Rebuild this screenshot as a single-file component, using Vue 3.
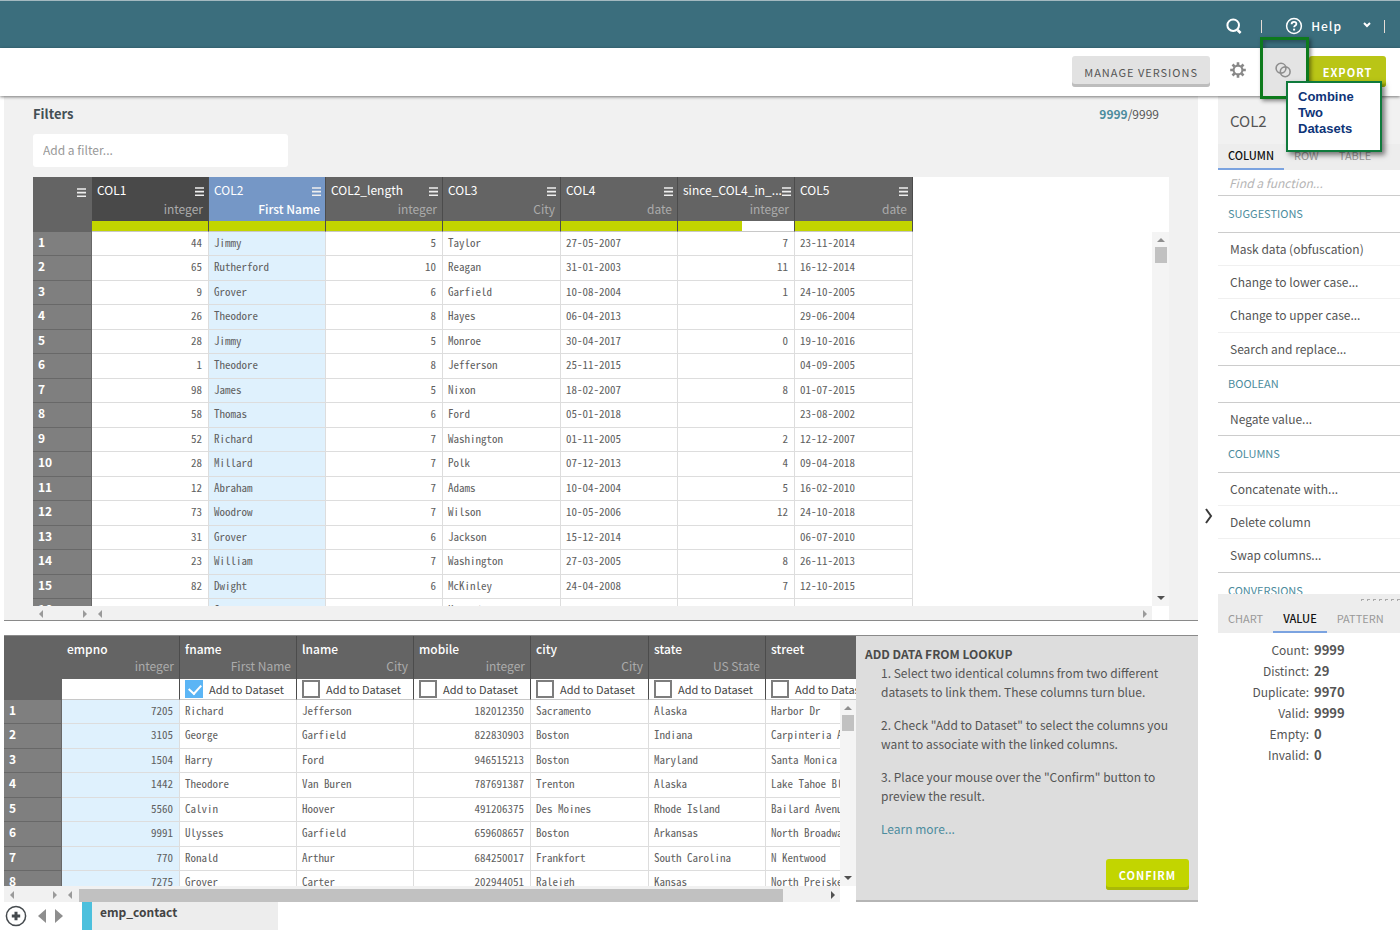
<script setup>
import { ref } from 'vue'

const columns = [
  { name: 'COL1', type: 'integer', width: 117, state: 'active', valid: 100, num: true },
  { name: 'COL2', type: 'First Name', width: 117, state: 'selected', valid: 100 },
  { name: 'COL2_length', type: 'integer', width: 117, valid: 100, num: true },
  { name: 'COL3', type: 'City', width: 118, valid: 100 },
  { name: 'COL4', type: 'date', width: 117, valid: 100 },
  { name: 'since_COL4_in_...', type: 'integer', width: 117, valid: 55, num: true },
  { name: 'COL5', type: 'date', width: 118, valid: 100 }
]

const rows = [
  [44, 'Jimmy', 5, 'Taylor', '27-05-2007', 7, '23-11-2014'],
  [65, 'Rutherford', 10, 'Reagan', '31-01-2003', 11, '16-12-2014'],
  [9, 'Grover', 6, 'Garfield', '10-08-2004', 1, '24-10-2005'],
  [26, 'Theodore', 8, 'Hayes', '06-04-2013', '', '29-06-2004'],
  [28, 'Jimmy', 5, 'Monroe', '30-04-2017', 0, '19-10-2016'],
  [1, 'Theodore', 8, 'Jefferson', '25-11-2015', '', '04-09-2005'],
  [98, 'James', 5, 'Nixon', '18-02-2007', 8, '01-07-2015'],
  [58, 'Thomas', 6, 'Ford', '05-01-2018', '', '23-08-2002'],
  [52, 'Richard', 7, 'Washington', '01-11-2005', 2, '12-12-2007'],
  [28, 'Millard', 7, 'Polk', '07-12-2013', 4, '09-04-2018'],
  [12, 'Abraham', 7, 'Adams', '10-04-2004', 5, '16-02-2010'],
  [73, 'Woodrow', 7, 'Wilson', '10-05-2006', 12, '24-10-2018'],
  [31, 'Grover', 6, 'Jackson', '15-12-2014', '', '06-07-2010'],
  [23, 'William', 7, 'Washington', '27-03-2005', 8, '26-11-2013'],
  [82, 'Dwight', 6, 'McKinley', '24-04-2008', 7, '12-10-2015'],
  [100, 'George', 6, 'Kennedy', '28-07-2008', 9, '18-09-2008']
]

const lookupColumns = ref([
  { name: 'empno', type: 'integer', width: 118, linked: true, num: true },
  { name: 'fname', type: 'First Name', width: 117, add: true },
  { name: 'lname', type: 'City', width: 117, add: false },
  { name: 'mobile', type: 'integer', width: 117, add: false, num: true },
  { name: 'city', type: 'City', width: 118, add: false },
  { name: 'state', type: 'US State', width: 117, add: false },
  { name: 'street', type: '', width: 117, add: false }
])

const lookupRows = [
  [7205, 'Richard', 'Jefferson', 182012350, 'Sacramento', 'Alaska', 'Harbor Dr'],
  [3105, 'George', 'Garfield', 822830903, 'Boston', 'Indiana', 'Carpinteria Ave'],
  [1504, 'Harry', 'Ford', 946515213, 'Boston', 'Maryland', 'Santa Monica Rd'],
  [1442, 'Theodore', 'Van Buren', 787691387, 'Trenton', 'Alaska', 'Lake Tahoe Blvd'],
  [5560, 'Calvin', 'Hoover', 491206375, 'Des Moines', 'Rhode Island', 'Bailard Avenue'],
  [9991, 'Ulysses', 'Garfield', 659608657, 'Boston', 'Arkansas', 'North Broadway'],
  [770, 'Ronald', 'Arthur', 684250017, 'Frankfort', 'South Carolina', 'N Kentwood'],
  [7275, 'Grover', 'Carter', 202944051, 'Raleigh', 'Kansas', 'North Preisker']
]

const functionGroups = [
  { title: 'SUGGESTIONS', items: ['Mask data (obfuscation)', 'Change to lower case...', 'Change to upper case...', 'Search and replace...'] },
  { title: 'BOOLEAN', items: ['Negate value...'] },
  { title: 'COLUMNS', items: ['Concatenate with...', 'Delete column', 'Swap columns...'] },
  { title: 'CONVERSIONS', items: [] }
]

const stats = [
  ['Count:', '9999'],
  ['Distinct:', '29'],
  ['Duplicate:', '9970'],
  ['Valid:', '9999'],
  ['Empty:', '0'],
  ['Invalid:', '0']
]
</script>

<template>
  <div class="app">
    <header class="topbar">
      <button class="icon-btn" aria-label="Search">
        <svg width="18" height="18" viewBox="0 0 18 18" fill="none" stroke="#fff">
          <circle cx="8.2" cy="8.2" r="5.8" stroke-width="2" />
          <path d="M12.6 13l3 3" stroke-width="2.6" />
        </svg>
      </button>
      <span class="bar"></span>
      <button class="help">
        <svg width="18" height="18" viewBox="0 0 18 18" fill="none" stroke="#fff">
          <circle cx="9" cy="9" r="7.4" stroke-width="1.5" />
          <path d="M6.6 7.2c0-1.5 1-2.4 2.4-2.4s2.4.9 2.4 2.1c0 1.6-2.3 1.6-2.3 3.4" stroke-width="1.8" />
          <path d="M8.1 12.6h2" stroke-width="1.9" />
        </svg>
        <span>Help</span>
        <svg class="caret" width="8" height="6" viewBox="0 0 8 6" fill="none" stroke="#fff" stroke-width="2">
          <path d="M1 1l3 3 3-3" />
        </svg>
      </button>
      <span class="bar"></span>
    </header>

    <div class="toolbar">
      <button class="btn grey">MANAGE VERSIONS</button>
      <button class="icon-btn gear" aria-label="Settings">
        <svg width="16" height="16" viewBox="0 0 16 16" fill="none" stroke="#888">
          <circle cx="8" cy="8" r="4.4" stroke-width="2.1" />
          <path stroke-width="2.6" d="M8 .2v3M8 12.8v3M.2 8h3M12.8 8h3M2.5 2.5l2 2M11.5 11.5l2 2M13.5 2.5l-2 2M4.5 11.5l-2 2" />
        </svg>
      </button>
      <div class="combine">
        <button class="combine-btn" aria-label="Combine two datasets">
          <svg width="16" height="16" viewBox="0 0 16 16" fill="none" stroke="#8e8e8e" stroke-width="1.6">
            <circle cx="6" cy="6.2" r="4.9" />
            <circle cx="10.2" cy="9.8" r="4.9" />
          </svg>
        </button>
        <div class="callout">Combine<br />Two<br />Datasets</div>
      </div>
      <button class="btn lime export">EXPORT</button>
    </div>

    <div class="body">
      <div class="work">
        <section class="dataset">
          <div class="filter-head">
            <label for="filter">Filters</label>
            <span class="count"><b>9999</b>/9999</span>
          </div>
          <input id="filter" class="filter" type="text" placeholder="Add a filter..." />
          <div class="grid">
            <table class="data">
              <colgroup>
                <col class="idx-col" />
                <col v-for="c in columns" :key="c.name" :style="{ width: c.width + 'px' }" />
              </colgroup>
              <thead>
                <tr>
                  <th class="corner">
                    <button class="menu" aria-label="Table menu">
                      <svg width="9" height="9" viewBox="0 0 9 9" stroke="#eee" stroke-width="1.6"><path d="M0 1h9M0 4.6h9M0 8.2h9" /></svg>
                    </button>
                  </th>
                  <th v-for="c in columns" :key="c.name" :class="c.state">
                    <div class="col-head">
                      <span class="name">{{ c.name }}</span>
                      <button class="menu" :aria-label="c.name + ' menu'">
                        <svg width="9" height="9" viewBox="0 0 9 9" stroke="#eee" stroke-width="1.6"><path d="M0 1h9M0 4.6h9M0 8.2h9" /></svg>
                      </button>
                    </div>
                    <div class="type">{{ c.type }}</div>
                    <div class="quality"><div :style="{ width: c.valid + '%' }"></div></div>
                  </th>
                </tr>
              </thead>
              <tbody>
                <tr v-for="(r, i) in rows" :key="i">
                  <th scope="row">{{ i + 1 }}</th>
                  <td v-for="(v, j) in r" :key="j" :class="{ num: columns[j].num, blue: columns[j].state === 'selected' }">{{ v }}</td>
                </tr>
              </tbody>
            </table>
            <div class="vscroll">
              <i class="arrow up"></i>
              <div class="thumb"></div>
              <i class="arrow down"></i>
            </div>
          </div>
          <div class="hscroll top">
            <div class="idx-scroll"><i class="arrow left"></i><i class="arrow right"></i></div>
            <div class="main-scroll"><i class="arrow left"></i><i class="arrow right"></i></div>
            <div class="scroll-corner"></div>
          </div>
        </section>

        <section class="lookup">
          <div class="lookup-data">
            <div class="grid">
              <table class="data">
                <colgroup>
                  <col class="idx-col" />
                  <col v-for="c in lookupColumns" :key="c.name" :style="{ width: c.width + 'px' }" />
                </colgroup>
                <thead>
                  <tr>
                    <th class="corner"></th>
                    <th v-for="c in lookupColumns" :key="c.name">
                      <div class="col-head"><span class="name">{{ c.name }}</span></div>
                      <div class="type">{{ c.type }}</div>
                      <div class="add">
                        <label v-if="!c.linked"><input v-model="c.add" type="checkbox" />Add to Dataset</label>
                      </div>
                    </th>
                  </tr>
                </thead>
                <tbody>
                  <tr v-for="(r, i) in lookupRows" :key="i">
                    <th scope="row">{{ i + 1 }}</th>
                    <td v-for="(v, j) in r" :key="j" :class="{ num: lookupColumns[j].num, blue: lookupColumns[j].linked }">{{ v }}</td>
                  </tr>
                </tbody>
              </table>
              <div class="vscroll">
                <i class="arrow up"></i>
                <div class="thumb"></div>
                <i class="arrow down"></i>
              </div>
            </div>
            <div class="hscroll">
              <div class="idx-scroll"><i class="arrow left"></i><i class="arrow right"></i></div>
              <div class="main-scroll">
                <i class="arrow left"></i>
                <div class="hthumb"></div>
                <i class="arrow right dark"></i>
              </div>
              <div class="scroll-corner"></div>
            </div>
          </div>
          <div class="guide">
            <h2>ADD DATA FROM LOOKUP</h2>
            <div class="steps">
              <p>1. Select two identical columns from two different datasets to link them. These columns turn blue.</p>
              <p>2. Check "Add to Dataset" to select the columns you want to associate with the linked columns.</p>
              <p>3. Place your mouse over the "Confirm" button to preview the result.</p>
              <a href="#">Learn more...</a>
            </div>
            <button class="btn lime confirm">CONFIRM</button>
          </div>
        </section>

        <footer class="tabs-bar">
          <button class="icon-btn" aria-label="Add dataset">
            <svg width="22" height="22" viewBox="0 0 22 22" fill="none" stroke="#454a4e">
              <circle cx="11" cy="11" r="9.6" stroke-width="1.5" />
              <path d="M11 6.8v8.4M6.8 11h8.4" stroke-width="3" />
            </svg>
          </button>
          <button class="icon-btn step" aria-label="Previous dataset">
            <svg width="8" height="14" viewBox="0 0 8 14" fill="#8e8e8e"><path d="M8 0v14L0 7z" /></svg>
          </button>
          <button class="icon-btn step next" aria-label="Next dataset">
            <svg width="8" height="14" viewBox="0 0 8 14" fill="#8e8e8e"><path d="M0 0v14l8-7z" /></svg>
          </button>
          <button class="sheet">emp_contact</button>
        </footer>
      </div>

      <button class="collapse" aria-label="Collapse panel">
        <svg width="8" height="16" viewBox="0 0 8 16" fill="none" stroke="#3a3a3a" stroke-width="2"><path d="M1 1l5 7-5 7" /></svg>
      </button>

      <aside class="side">
        <div class="functions">
          <h1>COL2</h1>
          <nav class="tabs">
            <button class="on">COLUMN</button>
            <button>ROW</button>
            <button>TABLE</button>
          </nav>
          <input class="find" type="text" aria-label="Find a function" placeholder="Find a function..." />
          <div v-for="g in functionGroups" :key="g.title" class="group">
            <h3>{{ g.title }}</h3>
            <ul>
              <li v-for="f in g.items" :key="f"><button>{{ f }}</button></li>
            </ul>
          </div>
        </div>
        <div class="insight">
          <div class="grip"><i v-for="n in 7" :key="n"></i></div>
          <nav class="tabs">
            <button>CHART</button>
            <button class="on">VALUE</button>
            <button>PATTERN</button>
          </nav>
          <dl>
            <template v-for="s in stats" :key="s[0]">
              <dt>{{ s[0] }}</dt>
              <dd>{{ s[1] }}</dd>
            </template>
          </dl>
        </div>
      </aside>
    </div>
  </div>
</template>

<style>
body {
  margin: 0;
  overflow: hidden;
}
</style>

<style scoped>
.app {
  --sans: "Noto Sans CJK SC", "Open Sans", sans-serif;
  --mono: "Noto Sans Mono CJK SC", "Liberation Mono", monospace;
  display: flex;
  flex-direction: column;
  height: 100vh;
  overflow: hidden;
  background: #fff;
  color: #555;
  font: 12px/18px var(--sans);
}
.app * { box-sizing: border-box; }
button, input {
  font: inherit;
  color: inherit;
  margin: 0;
}
button {
  border: 0;
  padding: 0;
  background: none;
}
.icon-btn { display: flex; }
h1, h2, h3, p, ul, dl, dd { margin: 0; padding: 0; font-weight: 400; }
ul { list-style: none; }

.topbar {
  flex: none;
  display: flex;
  align-items: center;
  justify-content: flex-end;
  height: 48px;
  padding: 3px 15px 0 0;
  border-top: 1px solid #a3b9c0;
  background: #3b6e7d;
  color: #fff;
}
.bar { width: 1px; height: 13px; margin-left: 18px; background: #e6dcd5; }
.help {
  display: flex;
  align-items: center;
  margin-left: 23px;
  font-weight: 500;
  letter-spacing: 1px;
}
.help span { margin-left: 8px; }
.caret { margin: 0 -5px 3px 21px; }

.toolbar {
  flex: none;
  position: relative;
  z-index: 2;
  display: flex;
  justify-content: flex-end;
  height: 48px;
  padding: 8px 14px 0 0;
  background: #fff;
  box-shadow: 0 1px 3px rgba(0, 0, 0, .5);
}
.btn {
  height: 31px;
  padding: 0 12px;
  border-radius: 3px;
  font-size: 11px;
  letter-spacing: 1px;
}
.grey { background: #e2e2e2; box-shadow: inset 0 -3px #bdbdbd; }
.lime { background: #c2d500; box-shadow: inset 0 -3px #a9b908; color: #fff; font-weight: 700; }
.export { width: 77px; background: #b9c516; }
.gear { margin: 6px 14px 0 20px; align-self: flex-start; }
.combine {
  position: relative;
  width: 49px;
  height: 62px;
  margin-top: -19px;
  border: 3px solid #0d7a1c;
  box-shadow: 2px 2px 4px rgba(0, 0, 0, .45), inset 2px 2px 4px rgba(0, 0, 0, .3);
}
.combine-btn {
  display: flex;
  align-items: center;
  justify-content: center;
  width: 100%;
  height: 48px;
  margin-top: 8px;
  padding: 0 4px 4px 0;
  background: rgba(225, 225, 225, .9);
}
.callout {
  position: absolute;
  left: 23px;
  top: 41px;
  width: 96px;
  height: 71px;
  padding: 6px 10px;
  border: 2px solid #0f7a3c;
  background: #fff;
  box-shadow: 3px 3px 5px rgba(0, 0, 0, .5);
  color: #0e3478;
  font: bold 13px/16px "Liberation Sans", sans-serif;
}

.body { flex: 1; display: flex; min-height: 0; }
.work { flex: 1; min-width: 0; display: flex; flex-direction: column; padding-left: 4px; }
.dataset {
  flex: 1;
  min-height: 0;
  display: flex;
  flex-direction: column;
  padding: 9px 29px 0;
  border-bottom: 1px solid #8a8a8a;
  background: #f1f1f1;
}
.filter-head { display: flex; justify-content: space-between; padding-right: 10px; }
.filter-head label { color: #444f55; font-size: 13px; font-weight: 700; }
.count b { color: #4c8c9d; font-weight: 700; }
.filter {
  flex: none;
  width: 255px;
  height: 33px;
  margin: 11px 0 10px;
  padding: 0 10px 2px;
  border: 0;
  border-radius: 3px;
  background: #fff;
}
.filter::placeholder { color: #999; }

.grid { position: relative; flex: 1; min-height: 0; overflow: hidden; background: #fff; }
.data { width: 0; table-layout: fixed; border-collapse: separate; border-spacing: 0; }
.idx-col { width: 59px; }
.data th, .data td { padding: 0; vertical-align: top; }
thead th {
  height: 55px;
  border-right: 1px solid #4c4c4c;
  border-bottom: 1px solid #c8c8c8;
  background: #646464;
  color: #fff;
  text-align: left;
  font-weight: 500;
}
.dataset .name { font-weight: 400; }
thead .corner { border-color: #646464; }
thead .active { background: #494949; }
thead .selected { background: #7597c6; }
.menu { flex: none; display: flex; width: 9px; }
.corner .menu { margin: 11px 5px 0 auto; }
.col-head { display: flex; justify-content: space-between; padding: 4px 4px 0 5px; white-space: nowrap; }
.col-head .menu { margin-top: 6px; }
.type { height: 22px; padding: 1px 5px 0; text-align: right; font-weight: 400; color: #ababab; }
.selected .type { color: #fff; font-weight: 500; }
.quality { height: 10px; background: #fff; }
.quality div { height: 10px; background: #c2d500; }
tbody th {
  height: 24px;
  border-right: 1px solid #686868;
  border-bottom: 1px solid #686868;
  background: #7f7f7f;
  color: #fff;
  text-align: left;
  font-weight: 700;
}
tbody td {
  height: 24px;
  border-right: 1px solid #ddd;
  border-bottom: 1px solid #ddd;
  background: #fff;
  color: #606060;
  font: 11px/20px var(--mono);
  white-space: nowrap;
}
.data tbody td { padding: 0 5px; }
.data tbody th { padding: 1px 5px 0; }
.data tbody .num { padding-right: 6px; text-align: right; }
.data tbody .blue { background: #dff1fd; }
tbody tr:nth-child(even) > * { height: 25px; }

.vscroll {
  position: absolute;
  top: 55px;
  right: 0;
  bottom: 0;
  width: 17px;
  display: flex;
  flex-direction: column;
  align-items: center;
  background: #f4f4f4;
}
.thumb { width: 12px; height: 16px; margin-top: 5px; background: #c1c1c1; }
.arrow { flex: none; width: 0; height: 0; border: 4px solid transparent; }
.up { margin-top: 2px; border-bottom-color: #8f8f8f; }
.down { margin: auto 0 2px; border-top-color: #505050; }
.left { border-right-color: #9a9a9a; }
.right { border-left-color: #9a9a9a; }
.right.dark { border-left-color: #505050; }
.hscroll { flex: none; display: flex; height: 16px; background: #f1f1f1; }
.top { height: 14px; }
.idx-scroll, .main-scroll { display: flex; align-items: center; justify-content: space-between; }
.idx-scroll { width: 59px; padding: 2px 1px 0 2px; }
.main-scroll { flex: 1; padding: 2px 1px 0 2px; }
.scroll-corner { width: 17px; background: #fff; }
.hthumb { width: 704px; height: 13px; margin-right: auto; margin-left: 7px; background: #c1c1c1; }

.lookup { flex: none; display: flex; height: 267px; margin-top: 14px; border-top: 1px solid #8a8a8a; }
.lookup-data { flex: 1; min-width: 0; display: flex; flex-direction: column; }
.lookup thead th { height: 64px; }
.lookup .idx-col { width: 58px; }
.lookup .idx-scroll { width: 58px; }
.lookup .vscroll { top: 64px; width: 16px; }
.lookup .scroll-corner { width: 16px; }
.lookup .type { height: 21px; line-height: 16px; padding-top: 0; }
.add { height: 20px; background: #fff; }
.add label {
  display: flex;
  align-items: center;
  height: 20px;
  padding-left: 5px;
  color: #444;
  font-size: 11px;
  font-weight: 400;
  white-space: nowrap;
}
.add input {
  appearance: none;
  flex: none;
  width: 18px;
  height: 18px;
  margin-right: 6px;
  border: 2px solid #7d7d7d;
  background: #fff;
}
.add input:checked { position: relative; border-color: #5bb5f5; background: #5bb5f5; }
.add input:checked::after {
  content: "";
  position: absolute;
  left: 4px;
  top: 0;
  width: 6px;
  height: 10px;
  border: solid #fff;
  border-width: 0 2px 2px 0;
  rotate: 42deg;
}

.guide {
  flex: none;
  display: flex;
  flex-direction: column;
  width: 342px;
  padding: 9px 9px 10px;
  border-bottom: 2px solid #b5b5b5;
  background: #ddd;
}
.guide h2 { font-size: 12px; font-weight: 700; color: #4a4a4a; }
.steps { padding: 0 10px 0 16px; line-height: 19px; }
.steps p { margin-bottom: 14px; }
a { color: #4c8c9d; text-decoration: none; }
.confirm { width: 83px; align-self: flex-end; margin-top: auto; }

.tabs-bar { flex: none; display: flex; align-items: flex-start; height: 28px; }
.tabs-bar .icon-btn { margin: 3px 0 0 1px; }
.tabs-bar .step { margin: 7px 0 0 11px; }
.tabs-bar .next { margin: 7px 19px 0 9px; }
.sheet {
  width: 196px;
  height: 28px;
  padding: 0 8px 9px;
  border-left: 10px solid #4cc0dd;
  background: #ededed;
  color: #444;
  font-size: 12px;
  font-weight: 700;
  text-align: left;
}

.collapse { flex: none; width: 20px; padding: 10px 0 0 2px; }

.side { flex: none; width: 182px; display: flex; flex-direction: column; }
.functions { flex: 1; min-height: 0; overflow: hidden; }
.functions h1 {
  height: 48px;
  padding: 15px 12px 0;
  background: #f1f1f1;
  color: #555;
  font-size: 15px;
  line-height: 20px;
}
.tabs { display: flex; gap: 10px; background: #ededed; color: #999; font-size: 11px; }
.tabs button { height: 26px; padding: 0 0 3px; border-bottom: 2px solid transparent; }
.tabs .on { border-color: #7ba3e0; color: #111; font-weight: 500; }
.functions .tabs { gap: 0; }
.functions .tabs button { padding: 0 10px 3px; }
.find {
  display: block;
  width: 100%;
  height: 26px;
  padding: 0 11px 0;
  border: 0;
  border-bottom: 1px solid #ccc;
  background: #fff;
  font-style: italic;
}
.find::placeholder { color: #b5b5b5; }
h3 {
  height: 37px;
  padding: 8px 10px 0;
  border-bottom: 1px solid #ccc;
  color: #4c8c9d;
  font-size: 11px;
}
.group li { height: 33px; border-bottom: 1px solid #f0f0f0; }
.group li:nth-child(3n) { height: 34px; }
.group li:last-child { border-color: #ccc; }
.group li button { width: 100%; height: 31px; padding: 0 12px; text-align: left; }
.insight { flex: none; height: 336px; }
.grip { display: flex; justify-content: flex-end; gap: 3px; height: 13px; padding-top: 5px; overflow: hidden; background: #ededed; }
.grip i { width: 3px; height: 2px; border: solid #aaa; border-width: 1px 0 0 1px; }
.insight .tabs { gap: 0; }
.insight .tabs button { padding: 0 10px 2px; }
dl { display: grid; grid-template-columns: 91px 1fr; column-gap: 5px; padding-top: 6px; line-height: 21px; }
dt { text-align: right; }
dd { font-size: 13px; font-weight: 700; }
</style>
